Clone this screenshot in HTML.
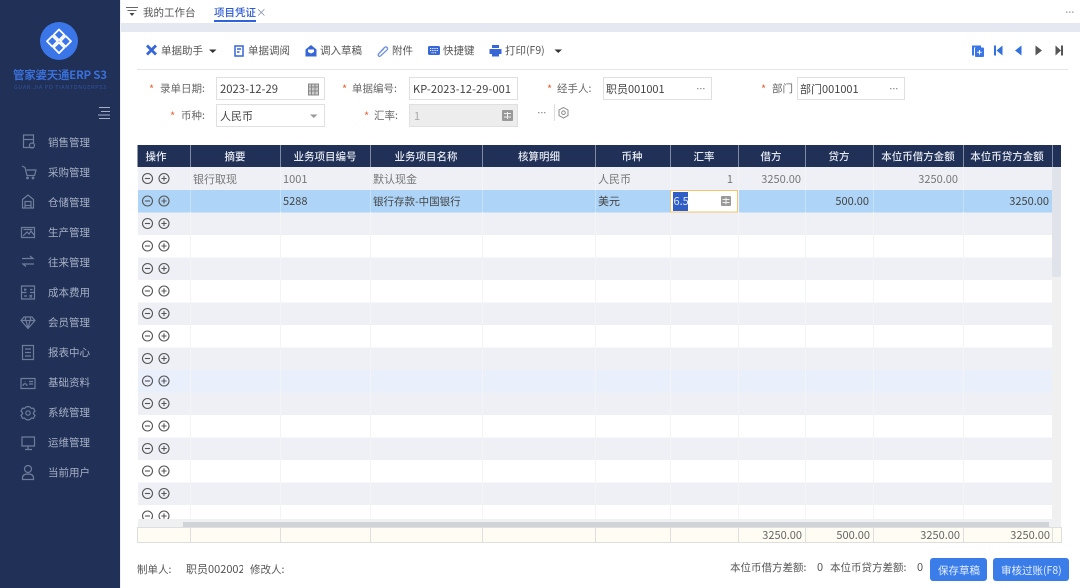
<!DOCTYPE html>
<html lang="zh"><head><meta charset="utf-8"><title>项目凭证</title>
<style>
html,body{margin:0;padding:0;background:#fff;width:1080px;height:588px;overflow:hidden}
svg{display:block;position:absolute;left:0;top:0}
text{font-family:"Noto Sans CJK SC","Liberation Sans",sans-serif;font-size:10.5px;fill:#555}
.n text{fill:#a7b0c6}
.h text{fill:#e6eaf2;text-anchor:middle;font-weight:500}
.l text{fill:#666}
.r{text-anchor:end}
.v text{fill:#444;font-size:11px}
.s{fill:#e8643a;font-size:11px}
.i{fill:none;stroke:#6f7d9c;stroke-width:1.2}
.g text{fill:#777;font-size:11px}
.g2 text{fill:#444;font-size:11px}
.f text{font-size:11px;fill:#666}
</style></head><body>
<svg width="1080" height="588" viewBox="0 0 1080 588">
<defs>
<g id="m"><circle r="5" fill="none" stroke="#555" stroke-width="1.1"/><path d="M-2.6 0H2.6" stroke="#555" stroke-width="1.1"/></g>
<g id="p"><circle r="5" fill="none" stroke="#555" stroke-width="1.1"/><path d="M-2.6 0H2.6M0-2.6V2.6" stroke="#555" stroke-width="1.1"/></g>
<path id="d" d="M0 0h1.500v1.200H0zM3 0h1.500v1.200H3zM6 0h1.500v1.200H6z" fill="#999"/>
</defs>
<!-- sidebar -->
<rect width="120" height="588" fill="#203056"/>
<circle cx="59" cy="41" r="19" fill="#3b76e8"/>
<g fill="none" stroke="#fff" stroke-width="1.8" stroke-linejoin="round">
<path d="M59 29.500l5.300 5.300-5.300 5.300-5.300-5.300z"/>
<path d="M52.300 36l5.300 5.300-5.300 5.300-5.300-5.300z"/>
<path d="M65.700 36l5.300 5.300-5.300 5.300-5.300-5.300z"/>
<path d="M59 42.500l5.300 5.300-5.300 5.300-5.300-5.300z"/>
</g>
<text x="13" y="79" style="font-size:11.500px;font-weight:700;fill:#3a6fd8" textLength="94">管家婆天通ERP S3</text>
<text x="14" y="89" style="font-size:5.500px;fill:#2f56a6" textLength="92">GUAN JIA PO TIANTONGERPS3</text>
<path d="M99 107.500h11M101 111.500h9M98 115h12M99 118.500h11" stroke="#a7b0c6" stroke-width="1" fill="none"/>
<g class="n">
<text x="48" y="146">销售管理</text><text x="48" y="176">采购管理</text><text x="48" y="206">仓储管理</text><text x="48" y="236">生产管理</text><text x="48" y="266">往来管理</text><text x="48" y="296">成本费用</text><text x="48" y="326">会员管理</text><text x="48" y="356">报表中心</text><text x="48" y="386">基础资料</text><text x="48" y="416">系统管理</text><text x="48" y="446">运维管理</text><text x="48" y="476">当前用户</text>
</g>
<g class="i">
<path d="M34 147.500h-10.500v-12.500h10v9M24 139.500h9"/><circle cx="32" cy="145.500" r="2.500"/>
<path d="M22 166l3 1.500 2 8h7.500l1.500-5.500h-9.500"/><circle cx="27.500" cy="178" r=".8"/><circle cx="33" cy="178" r=".8"/>
<path d="M22.500 199.500l5.500-4.500 5.500 4.500v8.500h-11zM25 201.500h6v4h-6zM25 208v-2.500M31 208v-2.500"/>
<path d="M21.500 227.500h13v10h-13zM23 236l4-4 2 2 2-3 3 4M23.500 229.500h9"/>
<path d="M22 258.500h11l-3-2.500M34 264h-11l3 2.500"/>
<path d="M21.500 286h13v13h-13zM21.500 292.500h5M30 292.500h4.500M25 288.500v2.500M24 289.500h2.500M30 289.500h2.500M29.500 295l2.500 2.500M32 295l-2.500 2.500M24 296h3"/>
<path d="M24 317h8l3 3.500-7 8-7-8zM21 320.500h14M26 320.500l2 8 2-8M26 317l-1 3.500M30 317l1 3.500"/>
<path d="M22.500 345.500h11v14h-11zM25 349h6M25 352.500h6M25 356h6"/>
<path d="M21 378.500h14v10h-14zM23 386c0-3 4-3 4 0M24.800 381.500h.5M29 381.500h4M29 384h4"/>
<path d="M28 406.500l2 .5 1.500 1.500 2-.3 1.500 3-1.500 1.300v1.500l1.500 1.300-1.500 3-2-.3-1.500 1.500-2 .5-2-.5-1.500-1.500-2 .3-1.500-3 1.500-1.300v-1.500l-1.500-1.300 1.500-3 2 .3 1.500-1.500z"/><circle cx="28" cy="413" r="2.200"/>
<path d="M22 437h12.500v9H22zM25 449.500h7M28 446v3"/>
<circle cx="28" cy="469" r="3.500"/><path d="M22.500 479.500v-1.500c0-2.500 2-4 5.500-4s5.500 1.500 5.500 4v1.500z"/>
</g>
<!-- top tabs -->
<rect x="120" y="23" width="960" height="9" fill="#e4e9f1"/>
<rect x="120" y="0" width="1" height="588" fill="#eef0f3"/>
<path d="M126 7.500h12M127.500 10.500h9" stroke="#666" fill="none"/><path d="M129.500 13h5l-2.500 3z" fill="#444"/>
<text x="143" y="16" style="fill:#555">我的工作台</text>
<text x="214" y="16" style="fill:#2c5ad0;font-weight:500">项目凭证</text>
<text x="256" y="16" style="fill:#7a8ba8">×</text>
<rect x="214" y="20" width="42" height="2" fill="#2f62e0"/>
<use href="#d" x="1066" y="11.500"/>
<!-- toolbar -->
<path d="M147 45.500l9 9M156 45.500l-9 9" stroke="#3767d6" stroke-width="2.800" fill="none"/>
<text x="161" y="54">单据助手</text><path d="M209 49.500h7.500l-3.750 3.500z" fill="#333"/>
<path d="M235 46h8v10h-8zM237 49h4M237 52h2.500" fill="none" stroke="#3767d6" stroke-width="1.500"/>
<text x="248" y="54">单据调阅</text>
<path fill="#3767d6" d="M305.500 49.500l5.500-4.500 5.500 4.500v7h-11z"/><path d="M308 49.500h6v2.500l-3 1.500-3-1.500z" fill="#fff"/>
<text x="320" y="54">调入草稿</text>
<path d="M378.500 54l6-6.500c2-1.500 4 .5 2.500 2.500l-6.500 6c-1.500 1-3-.5-2-2l5.500-5.500" fill="none" stroke="#6e8fe0" stroke-width="1.300"/>
<text x="392" y="54">附件</text>
<rect x="428" y="46" width="12" height="9" rx="1.500" fill="#3767d6"/><path d="M430 48.500h8M430 50.500h8M431.500 52.800h5" stroke="#fff" stroke-width="1" stroke-dasharray="1 .8" fill="none"/>
<text x="443" y="54">快捷键</text>
<path fill="#3767d6" d="M492 45h7v3h-7zM489.500 49h12v5h-2.500v2.500h-7V54h-2.500z"/>
<text x="505" y="54">打印(F9)</text><path d="M554.500 49.500h7.500l-3.750 3.500z" fill="#333"/>
<path d="M972 45.500h9v2h-7v8h-2z" fill="#3b76e8"/><rect x="975" y="47.500" width="9" height="9.500" rx="1" fill="#3b76e8"/><path d="M979.500 50v4.500M977.200 52.200h4.500" stroke="#fff"/>
<path d="M994 45.500h2v10h-2zM1002.500 45.500v10l-6-5z" fill="#3270dc"/>
<path d="M1021.500 45.500v10l-6.500-5z" fill="#3270dc"/>
<path d="M1035.500 45.500v10l6.500-5z" fill="#555"/>
<path d="M1055.500 45.500v10l5.500-5zM1061 45.500h2v10h-2z" fill="#555"/>
<rect x="137" y="69" width="931" height="1" fill="#e6e6e6"/>
<!-- form -->
<g fill="#fff" stroke="#e0e0e0">
<rect x="216.500" y="77.500" width="108" height="22"/><rect x="409.500" y="77.500" width="108" height="22"/><rect x="603.500" y="77.500" width="108" height="22"/><rect x="797.500" y="77.500" width="107" height="22"/>
<rect x="216.500" y="104.500" width="108" height="22"/><rect x="409.500" y="104.500" width="108" height="22" fill="#ededed"/>
</g>
<text class="s" x="149" y="93">*</text><text class="s" x="342" y="93">*</text><text class="s" x="547" y="93">*</text><text class="s" x="761" y="93">*</text><text class="s" x="170" y="120">*</text><text class="s" x="364" y="120">*</text>
<g class="l">
<text x="160" y="92">录单日期:</text><text x="352" y="92">单据编号:</text><text x="557" y="92">经手人:</text><text x="772" y="92">部门</text><text x="181" y="119">币种:</text><text x="374" y="119">汇率:</text>
</g>
<g class="v">
<text x="220" y="93" style="font-size:11.300px">2023-12-29</text>
<text x="413" y="93" textLength="98">KP-2023-12-29-001</text>
<text x="606" y="93">职员001001</text><text x="800" y="93">部门001001</text>
<text x="220" y="120">人民币</text>
</g>
<text x="414" y="120" style="font-size:11px;fill:#aaa">1</text>
<path d="M308.500 84h10v11h-10zM308.500 87h10M311.500 84v11M315 84v11M308.500 91h10" fill="#ccc" stroke="#888"/>
<path d="M310 115.500h7.500l-3.750 3.500z" fill="#999" transform="translate(0 -1)"/>
<rect x="502" y="110" width="11" height="11" rx="1" fill="#999"/><path d="M504 113.500h7M504 117h7M507.500 112v7" stroke="#eee"/>
<use href="#d" x="697" y="88"/><use href="#d" x="890" y="88"/><use href="#d" x="538" y="112"/>
<rect x="554" y="104" width="1" height="17" fill="#ddd"/>
<path d="M563.500 107.500l4.500 2.500v5.500l-4.500 2.500-4.500-2.500V110z" fill="none" stroke="#888"/><circle cx="563.500" cy="112.700" r="1.800" fill="none" stroke="#888"/>
<!-- grid rows -->
<rect x="137.500" y="145" width="924" height="383" fill="#fff"/>
<g fill="#eef0f5">
<rect x="138" y="167" width="914" height="23"/><rect x="138" y="212.500" width="914" height="22.500"/><rect x="138" y="257.500" width="914" height="22.500"/><rect x="138" y="302.500" width="914" height="22.500"/><rect x="138" y="347.500" width="914" height="22.500"/><rect x="138" y="392.500" width="914" height="22.500"/><rect x="138" y="437.500" width="914" height="22.500"/><rect x="138" y="482.500" width="914" height="22.500"/>
</g>
<rect x="138" y="370" width="914" height="22.500" fill="#e9effb"/>
<rect x="138" y="190" width="914" height="22.500" fill="#aed5f7"/>
<path d="M190.500 167V519M280.500 167V519M370.500 167V519M482.500 167V519M595.500 167V519M670.500 167V519M738.500 167V519M805.500 167V519M873.500 167V519M963.500 167V519" stroke="#f3f4f6" fill="none"/>
<path d="M190.500 190V212M280.500 190V212M370.500 190V212M482.500 190V212M595.500 190V212M805.500 190V212M873.500 190V212M963.500 190V212" stroke="#c4e1fa" fill="none"/>
<!-- header -->
<rect x="137.500" y="145" width="923.500" height="22" fill="#203056"/>
<path d="M190.500 145v22M280.500 145v22M370.500 145v22M482.500 145v22M595.500 145v22M670.500 145v22M738.500 145v22M805.500 145v22M873.500 145v22M963.500 145v22M1052.500 145v22" stroke="#7e8aa6" fill="none"/>
<g class="h">
<text x="156" y="160">操作</text><text x="235" y="160">摘要</text><text x="325" y="160">业务项目编号</text><text x="426" y="160">业务项目名称</text><text x="539" y="160">核算明细</text><text x="632" y="160">币种</text><text x="704" y="160">汇率</text><text x="771" y="160">借方</text><text x="839" y="160">贷方</text><text x="918" y="160">本位币借方金额</text><text x="1007" y="160">本位币贷方金额</text>
</g>
<!-- row icons -->
<use href="#m" x="147.500" y="178.500"/><use href="#p" x="164" y="178.500"/>
<use href="#m" x="147.500" y="201"/><use href="#p" x="164" y="201"/>
<use href="#m" x="147.500" y="223.500"/><use href="#p" x="164" y="223.500"/>
<use href="#m" x="147.500" y="246"/><use href="#p" x="164" y="246"/>
<use href="#m" x="147.500" y="268.500"/><use href="#p" x="164" y="268.500"/>
<use href="#m" x="147.500" y="291"/><use href="#p" x="164" y="291"/>
<use href="#m" x="147.500" y="313.500"/><use href="#p" x="164" y="313.500"/>
<use href="#m" x="147.500" y="336"/><use href="#p" x="164" y="336"/>
<use href="#m" x="147.500" y="358.500"/><use href="#p" x="164" y="358.500"/>
<use href="#m" x="147.500" y="381"/><use href="#p" x="164" y="381"/>
<use href="#m" x="147.500" y="403.500"/><use href="#p" x="164" y="403.500"/>
<use href="#m" x="147.500" y="426"/><use href="#p" x="164" y="426"/>
<use href="#m" x="147.500" y="448.500"/><use href="#p" x="164" y="448.500"/>
<use href="#m" x="147.500" y="471"/><use href="#p" x="164" y="471"/>
<use href="#m" x="147.500" y="493.500"/><use href="#p" x="164" y="493.500"/>
<use href="#m" x="147.500" y="516"/><use href="#p" x="164" y="516"/>
<!-- row 1 -->
<g class="g">
<text x="193" y="183">银行取现</text><text x="283" y="183">1001</text><text x="373" y="183">默认现金</text><text x="598" y="183">人民币</text><text class="r" x="733" y="183">1</text><text class="r" x="801" y="183">3250.00</text><text class="r" x="958" y="183">3250.00</text>
</g>
<!-- row 2 -->
<g class="g2">
<text x="283" y="205">5288</text><text x="373" y="205" style="font-size:10.500px">银行存款-中国银行</text><text x="598" y="205">美元</text><text class="r" x="869" y="205">500.00</text><text class="r" x="1049" y="205">3250.00</text>
</g>
<rect x="670.500" y="190.500" width="67" height="21.500" fill="#fff" stroke="#f6c36a"/>
<rect x="673" y="192" width="15" height="19" fill="#2f5fc4"/>
<text x="673.500" y="205" style="fill:#dfe8fa;font-size:11px">6.5</text>
<rect x="721" y="196" width="10" height="10" rx="1" fill="#999"/><path d="M722.500 199.500h7M722.500 202.500h7M726 197.500v7" stroke="#eee"/>
<!-- scrollbars -->
<rect x="1052" y="167" width="9" height="360" fill="#f0f0f0"/>
<rect x="1052" y="167" width="9" height="110" rx="2" fill="#e0e4ea"/>
<rect x="138" y="519" width="923" height="8" fill="#eef0f2"/>
<rect x="183" y="522" width="866" height="5" fill="#d0d3d7"/>
<!-- footer row -->
<rect x="137.500" y="527.500" width="924" height="15" fill="#fefcf3" stroke="#dedede"/>
<path d="M190.500 527v15M280.500 527v15M370.500 527v15M482.500 527v15M595.500 527v15M670.500 527v15M738.500 527v15M805.500 527v15M873.500 527v15M963.500 527v15M1052.500 527v15" stroke="#dedede" fill="none"/>
<g class="f"><text class="r" x="802" y="539">3250.00</text><text class="r" x="870" y="539">500.00</text><text class="r" x="960" y="539">3250.00</text><text class="r" x="1050" y="539">3250.00</text></g>
<!-- bottom -->
<text x="137" y="573">制单人:</text>
<svg x="186" y="560" width="57" height="20"><text x="0" y="13" style="font-size:11px">职员002002</text></svg>
<text x="250" y="573">修改人:</text>
<text x="730" y="571">本位币借方差额:</text><text x="817" y="571" style="font-size:11px">0</text>
<text x="830" y="571">本位币贷方差额:</text><text x="917" y="571" style="font-size:11px">0</text>
<rect x="930" y="558" width="57" height="23" rx="3" fill="#3b7de8"/>
<rect x="993" y="558" width="76" height="23" rx="3" fill="#3b7de8"/>
<text x="938" y="574" style="fill:#e4eeff">保存草稿</text>
<text x="1001" y="574" style="fill:#e4eeff">审核过账(F8)</text>
</svg>
</body></html>
